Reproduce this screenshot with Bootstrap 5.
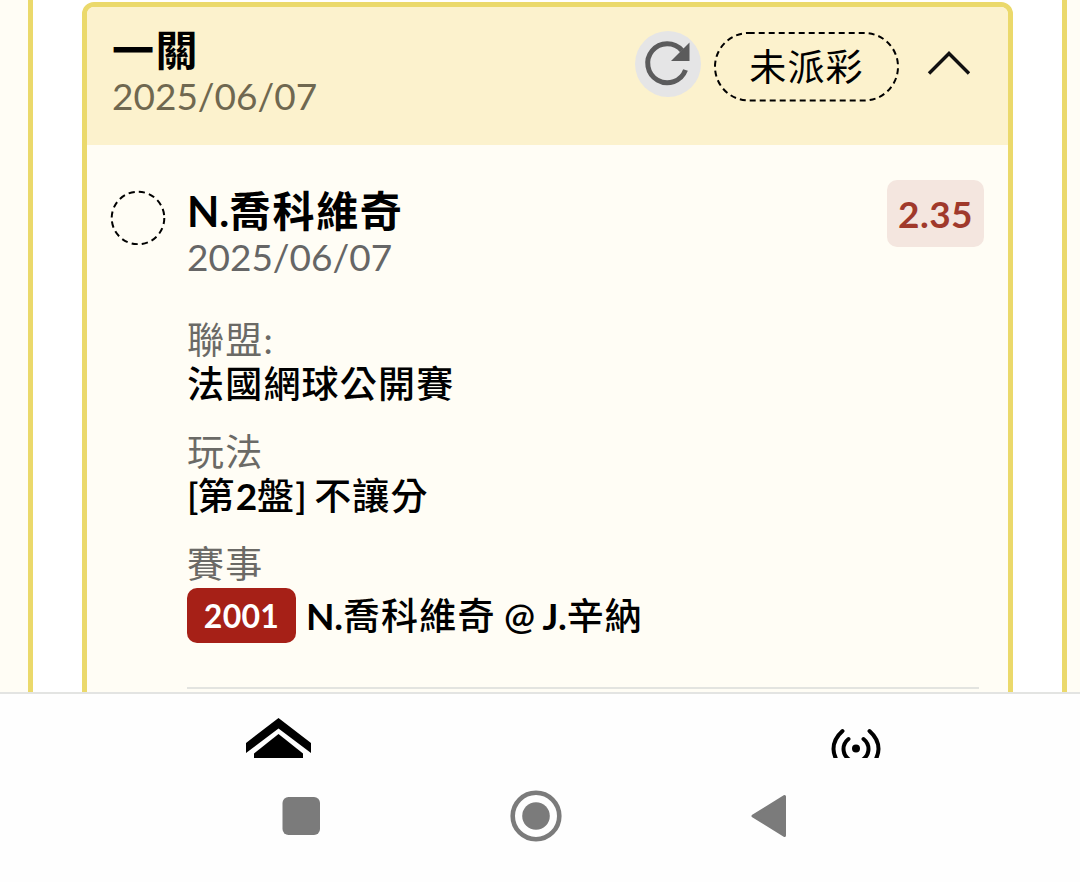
<!DOCTYPE html>
<html lang="zh-Hant">
<head>
    <meta charset="UTF-8">
    <meta name="viewport" content="width=device-width, initial-scale=1.0">
    <title>一關</title>
    <link href="https://cdn.jsdelivr.net/npm/bootstrap@5.3.0/dist/css/bootstrap.min.css" rel="stylesheet">
    <style>
        body {
            height: 882px;
            overflow: hidden;
            background: #fefefe;
            color: #000;
            font-family: Lato, "Noto Sans CJK TC", sans-serif;
            font-size: 37px;
            letter-spacing: 1.2px;
            line-height: 44px;
        }
        svg {
            display: block;
        }
        .slip-area {
            height: 692px;
            padding: 0 13px 0 28px;
            background: #fffdf5;
        }
        .slip-frame {
            height: 692px;
            padding: 2px 49px 0;
            background: #fff;
            border: solid #ebd96b;
            border-width: 0 5px;
        }
        .slip-card {
            height: 720px;
            background: #fffdf5;
            border: 5px solid #ebd96b;
            border-radius: 12px;
        }
        .slip-head {
            height: 138px;
            padding: 21px 37px 0 25px;
            background: #fcf2cd;
            border-radius: 7px 7px 0 0;
        }
        .slip-title {
            font-size: 42px;
            font-weight: 700;
            letter-spacing: 1.6px;
        }
        .slip-date {
            padding-top: 2px;
            color: #666;
            letter-spacing: 0;
        }
        .slip-head .slip-date {
            color: #6f6850;
        }
        .reload-btn {
            width: 66px;
            height: 66px;
            margin: 3px 13px 0 0;
            background: #e5e5e6;
        }
        .status-pill {
            width: 185px;
            height: 70px;
            margin-top: 4px;
        }
        .toggle-icon {
            margin: 22px 0 0 28px;
        }
        .slip-body {
            padding: 35px 24px 0;
        }
        .pick-mark {
            margin: 9px 21px 0 -1px;
        }
        .pick-name {
            padding: 9px 0 39px;
        }
        .odds-tag {
            width: 97px;
            height: 67px;
            background: #f4e6df;
            color: #a0392b;
            border-radius: 10px;
            font-weight: 700;
            letter-spacing: 0.4px;
        }
        .field-row {
            margin-bottom: 24px;
        }
        .field-label {
            color: #6b6a66;
        }
        .field-value {
            font-weight: 500;
        }
        .latin {
            font-weight: 700;
            letter-spacing: -0.2px;
        }
        .at-sign {
            font-weight: 600;
            letter-spacing: -0.9px;
        }
        .match-code {
            width: 109px;
            height: 55px;
            margin-right: 10px;
            background: #a62017;
            color: #fff;
            border-radius: 10px;
            font-size: 32px;
            font-weight: 700;
            letter-spacing: 0.3px;
        }
        .match-label {
            padding-bottom: 2px;
        }
        .slip-rule {
            height: 2px;
            margin: 44px 5px 0 0;
            border: 0;
            background: #e3e4e0;
            opacity: 1;
        }
        .tab-bar {
            height: 66px;
            border-top: 2px solid #e3e4e2;
        }
        .home-tab {
            padding-left: 17px;
        }
        .live-tab {
            padding-left: 91px;
        }
        .sys-bar {
            height: 124px;
        }
    </style>
</head>
<body>
    <main class="slip-area overflow-hidden">
        <div class="slip-frame overflow-hidden">
            <section class="slip-card">
                <!-- Card header -->
                <header class="slip-head d-flex align-items-start">
                    <div class="me-auto">
                        <div class="slip-title">一關</div>
                        <div class="slip-date">2025/06/07</div>
                    </div>
                    <div class="reload-btn rounded-circle">
                        <svg width="66" height="66" viewBox="0 0 66 66">
                            <path d="M47 19.500A19.500 19.500 0 1 0 50.500 39" fill="none" stroke="#5b5b5c" stroke-width="5"/>
                            <path d="M54.5 11.500v18.500H36z" fill="#5b5b5c"/>
                        </svg>
                    </div>
                    <div class="status-pill position-relative d-flex align-items-center justify-content-center">
                        <svg class="position-absolute top-0 start-0" width="185" height="70">
                            <rect x="1" y="1" width="183" height="67.5" rx="33.7" fill="none" stroke="#000" stroke-width="2" stroke-dasharray="6 4"/>
                        </svg>
                        <span>未派彩</span>
                    </div>
                    <svg class="toggle-icon" width="44" height="26" viewBox="0 0 44 26">
                        <path d="M2 23.500L22 3.500L42 23.500" fill="none" stroke="#111" stroke-width="3.4"/>
                    </svg>
                </header>

                <!-- Bet details -->
                <div class="slip-body d-flex align-items-start">
                    <svg class="pick-mark flex-shrink-0" width="56" height="56">
                        <circle cx="28" cy="29" r="26.3" fill="none" stroke="#000" stroke-width="2" stroke-dasharray="6.2 4.13"/>
                    </svg>
                    <div class="flex-grow-1">
                        <div class="d-flex align-items-start justify-content-between">
                            <div class="pick-name">
                                <div class="slip-title"><span class="latin">N.</span>喬科維奇</div>
                                <div class="slip-date">2025/06/07</div>
                            </div>
                            <div class="odds-tag d-flex align-items-center justify-content-center">2.35</div>
                        </div>
                        <div class="field-row">
                            <div class="field-label">聯盟:</div>
                            <div class="field-value">法國網球公開賽</div>
                        </div>
                        <div class="field-row">
                            <div class="field-label">玩法</div>
                            <div class="field-value"><span class="at-sign">[</span>第<span class="latin">2</span>盤<span class="at-sign">] </span>不讓分</div>
                        </div>
                        <div class="field-row mb-0">
                            <div class="field-label match-label">賽事</div>
                            <div class="field-value d-flex align-items-center">
                                <span class="match-code d-flex align-items-center justify-content-center">2001</span>
                                <span><span class="latin">N.</span>喬科維奇<span class="at-sign"> @ </span><span class="latin">J.</span>辛納</span>
                            </div>
                        </div>
                        <hr class="slip-rule">
                    </div>
                </div>
            </section>
        </div>
    </main>

    <!-- Tab bar, lower part of the icons is cut off -->
    <nav class="tab-bar d-flex overflow-hidden">
        <div class="home-tab col-6 d-flex justify-content-center">
            <svg width="66" height="66" viewBox="0 0 66 66">
                <path d="M0 49L32.5 24L65 49V59L32.5 34.5L0 59z"/>
                <path d="M8 59.5L32.5 40L57 59.5V66H8z"/>
            </svg>
        </div>
        <div class="live-tab col-6 d-flex justify-content-center">
            <svg width="56" height="66" viewBox="0 0 56 66">
                <g fill="none" stroke="#000" stroke-width="4" stroke-linecap="round">
                    <path d="M14.500 37Q5.500 45 5.500 55Q5.500 62 11 70M41.500 37Q50.500 45 50.500 55Q50.500 62 45 70"/>
                    <path d="M20.500 45Q15.500 49 15.500 55Q15.500 61 20.500 65M35.500 45Q40.500 49 40.500 55Q40.500 61 35.500 65"/>
                </g>
                <circle cx="28" cy="54.500" r="4"/>
            </svg>
        </div>
    </nav>

    <!-- System navigation -->
    <footer class="sys-bar d-flex justify-content-center">
        <svg width="520" height="100" viewBox="0 0 520 100" fill="#7b7b7b">
            <rect x="2.500" y="39" width="37.500" height="38" rx="6"/>
            <circle cx="256" cy="58" r="13.8"/>
            <circle cx="256" cy="58" r="23.3" fill="none" stroke="#7b7b7b" stroke-width="4.6"/>
            <path d="M473 58L504.500 38.500V77.500z" stroke="#7b7b7b" stroke-width="3" stroke-linejoin="round"/>
        </svg>
    </footer>
    <script src="https://cdn.jsdelivr.net/npm/bootstrap@5.3.0/dist/js/bootstrap.bundle.min.js"></script>
</body>
</html>
